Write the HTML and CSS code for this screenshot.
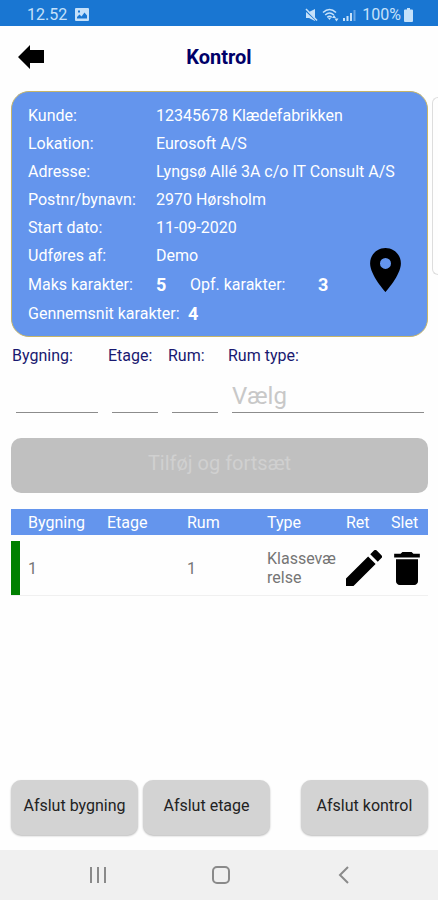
FILE: index.html
```html
<!DOCTYPE html>
<html lang="da">
<head>
<meta charset="utf-8">
<meta name="viewport" content="width=device-width, initial-scale=1">
<title>Kontrol</title>
<link rel="stylesheet" href="styles.css">
</head>
<body>
<div class="status">
  <span class="status-time">12.52</span>
  <svg class="status-picture" width="14" height="13" viewBox="0 0 14 13"><path fill="currentColor" fill-rule="evenodd" d="M1 0h12a1 1 0 0 1 1 1v11a1 1 0 0 1-1 1H1a1 1 0 0 1-1-1V1a1 1 0 0 1 1-1zM2 10.500h10V7.500L9.500 4.500 6.500 8.500 4.500 6.500 2 9zM3 2.500v2h2v-2z"/></svg>
  <span class="status-icons">
    <svg width="13" height="14" viewBox="0 0 13 14"><path fill="currentColor" d="M1 4h3l6-3v12L4 10H1z"/><path d="M0 2l12 11" stroke="#1976d2" stroke-width="1.500"/><path d="M1 1l11 11.500" stroke="currentColor" stroke-width="1.500"/></svg>
    <svg width="17" height="14" viewBox="0 0 17 14" fill="none" stroke="currentColor" stroke-width="1.600"><path d="M1 4.500Q7.500-1.500 14 4.500M3.200 7Q7.500 3 11.800 7M5.300 9.300Q7.500 7.300 9.700 9.300"/><path fill="currentColor" stroke="none" d="M6 10h3l-1.500 2zM10 10l2-3 2 3zM12.500 10.500h4L14.500 13.500z"/></svg>
    <svg width="13" height="14" viewBox="0 0 13 14" fill="currentColor"><path d="M0 10h2v3H0zM3.500 8h2v5h-2zM7 5h2v8H7z"/><path opacity=".45" d="M10.500 2h2v11h-2z"/></svg>
  </span>
  <span class="status-battery">100%</span>
  <svg width="9" height="14" viewBox="0 0 9 14"><path fill="currentColor" d="M3 0h3v1.500h2a1 1 0 0 1 1 1V13a1 1 0 0 1-1 1H1a1 1 0 0 1-1-1V2.500a1 1 0 0 1 1-1h2z"/></svg>
</div>

<header class="header">
  <button class="icon-button" type="button" aria-label="Tilbage">
    <svg width="26" height="24" viewBox="0 0 26 24"><path d="M0 12L12 0v5h14v13H12v6z"/></svg>
  </button>
  <h1 class="title">Kontrol</h1>
</header>

<main class="main">
  <div class="carousel">
    <section class="card">
      <dl class="facts">
        <div class="fact"><dt>Kunde:</dt><dd>12345678 Klædefabrikken</dd></div>
        <div class="fact"><dt>Lokation:</dt><dd>Eurosoft A/S</dd></div>
        <div class="fact"><dt>Adresse:</dt><dd>Lyngsø Allé 3A c/o IT Consult A/S</dd></div>
        <div class="fact"><dt>Postnr/bynavn:</dt><dd>2970 Hørsholm</dd></div>
        <div class="fact"><dt>Start dato:</dt><dd>11-09-2020</dd></div>
        <div class="fact"><dt>Udføres af:</dt><dd>Demo</dd></div>
      </dl>
      <dl class="grades">
        <dt class="grade-max">Maks karakter:</dt><dd class="grade-max-value">5</dd>
        <dt class="grade-achieved">Opf. karakter:</dt><dd>3</dd>
      </dl>
      <dl class="grades">
        <dt class="grade-average">Gennemsnit karakter:</dt><dd>4</dd>
      </dl>
      <button class="icon-button pin" type="button" aria-label="Vis på kort">
        <svg width="31" height="44" viewBox="5 2 14 20"><path d="M12 2C8.130 2 5 5.130 5 9c0 5.250 7 13 7 13s7-7.750 7-13c0-3.870-3.130-7-7-7zm0 9.500a2.500 2.500 0 0 1 0-5 2.500 2.500 0 0 1 0 5z"/></svg>
      </button>
    </section>
    <div class="next-card"></div>
  </div>

  <form class="form">
    <div class="fields">
      <div class="field"><label for="bygning">Bygning:</label><input id="bygning" type="text"></div>
      <div class="field"><label for="etage">Etage:</label><input id="etage" type="text"></div>
      <div class="field"><label for="rum">Rum:</label><input id="rum" type="text"></div>
      <div class="field"><label for="rumtype">Rum type:</label><select id="rumtype"><option>Vælg</option></select></div>
    </div>
    <button class="add" type="submit" disabled>Tilføj og fortsæt</button>
  </form>

  <table class="rooms">
    <colgroup><col class="col-building"><col class="col-floor"><col class="col-room"><col><col class="col-edit"><col class="col-delete"></colgroup>
    <thead>
      <tr><th>Bygning</th><th>Etage</th><th>Rum</th><th>Type</th><th>Ret</th><th>Slet</th></tr>
    </thead>
    <tbody>
      <tr>
        <td>1</td><td></td><td>1</td><td class="type">Klasseværelse</td>
        <td><button class="icon-button" type="button" aria-label="Ret"><svg width="36" height="36" viewBox="3 3 18 18"><path d="M3 17.250V21h3.750L17.810 9.940l-3.750-3.750L3 17.250zM20.710 7.040a1 1 0 0 0 0-1.410l-2.340-2.340a1 1 0 0 0-1.410 0l-1.830 1.830 3.750 3.750 1.830-1.830z"/></svg></button></td>
        <td><button class="icon-button delete" type="button" aria-label="Slet"><svg width="26" height="33" viewBox="5 3 14 18"><path d="M6 19c0 1.100.9 2 2 2h8c1.100 0 2-.9 2-2V7H6v12zM19 4h-3.500l-1-1h-5l-1 1H5v2h14V4z"/></svg></button></td>
      </tr>
    </tbody>
  </table>

  <div class="actions">
    <button type="button">Afslut bygning</button>
    <button type="button">Afslut etage</button>
    <button class="finish" type="button">Afslut kontrol</button>
  </div>
</main>

<nav class="nav" aria-label="System">
  <button class="icon-button" type="button" aria-label="Seneste apps"><svg width="18" height="18" viewBox="0 0 18 18" fill="none" stroke="#8a8a8a" stroke-width="2"><path d="M2 1v16M9 1v16M16 1v16"/></svg></button>
  <button class="icon-button" type="button" aria-label="Hjem"><svg width="18" height="18" viewBox="0 0 18 18" fill="none" stroke="#8a8a8a" stroke-width="2"><rect x="1" y="1" width="16" height="16" rx="4"/></svg></button>
  <button class="icon-button" type="button" aria-label="Tilbage"><svg width="18" height="18" viewBox="0 0 18 18" fill="none" stroke="#8a8a8a" stroke-width="2"><path d="M13 1L5 9l8 8"/></svg></button>
</nav>
</body>
</html>
```

FILE: styles.css
```css
* {
  box-sizing: border-box;
}

body {
  display: flex;
  flex-direction: column;
  min-height: 100vh;
  margin: 0;
  overflow-x: hidden;
  background: #fefefe;
  font-family: Roboto, "Liberation Sans", sans-serif;
  font-size: 16px;
}

button,
input,
select {
  font: inherit;
}

svg {
  display: block;
}

dl,
dd {
  margin: 0;
}

.icon-button {
  display: block;
  padding: 0;
  border: 0;
  background: none;
}

/* Status bar */

.status {
  display: flex;
  align-items: center;
  padding: 3px 25px 0 27px;
  background: #1976d2;
  color: #c5e1fa;
  line-height: 23px;
}

.status-picture {
  margin-left: 8px;
}

.status-icons {
  display: flex;
  gap: 4px;
  margin-left: auto;
}

.status-battery {
  margin: 0 3px 0 6px;
}

/* Header */

.header {
  display: grid;
  grid-template-columns: 26px 1fr 26px;
  align-items: center;
  padding: 0 18px;
}

.title {
  margin: 0;
  color: #000068;
  font-size: 20px;
  font-weight: 700;
  line-height: 62px;
  text-align: center;
}

/* Customer card */

.main {
  display: flex;
  flex: 1;
  flex-direction: column;
  padding: 3px 10px 15px 11px;
}

.carousel {
  display: flex;
  gap: 4px;
  margin-right: -10px;
}

.card {
  position: relative;
  flex: 1;
  padding: 10px 16px 8px;
  border: 1px solid #c6b569;
  border-radius: 18px;
  background: #6495ed;
  color: #fff;
}

.next-card {
  width: 6px;
  margin: 6px 0 62px;
  border: 1px solid #ddd;
  border-right: 0;
  border-radius: 6px 0 0 6px;
}

.fact {
  display: grid;
  grid-template-columns: 128px 1fr;
  line-height: 28px;
}

.grades {
  display: flex;
  line-height: 29px;
}

.grades dd {
  font-size: 18px;
  font-weight: 700;
}

.grade-max {
  width: 128px;
}

.grade-max-value {
  width: 34px;
}

.grade-achieved {
  width: 128px;
}

.grade-average {
  width: 160px;
}

.pin {
  position: absolute;
  right: 26px;
  bottom: 44px;
}

/* Entry form */

.fields {
  display: grid;
  grid-template-columns: 90px 54px 54px 1fr;
  gap: 6px;
  padding: 8px 0 0 1px;
}

.field {
  display: flex;
  flex-direction: column;
  color: #191970;
  line-height: 22px;
}

.field input,
.field select {
  min-width: 0;
  height: 46px;
  margin: 0 4px;
  padding: 12px 0 0;
  border: 0;
  border-bottom: 1px solid #8c8c8c;
  border-radius: 0;
  background: none;
  color: #c8c8c8;
  font-size: 24px;
  line-height: 32px;
  appearance: none;
}

.add {
  display: block;
  width: 100%;
  margin-top: 25px;
  padding: 10px 0 15px;
  border: 0;
  border-radius: 10px;
  background: #c0c0c0;
  color: #d0d0d0;
  font-size: 20px;
  line-height: 30px;
}

/* Room table */

.rooms {
  width: 100%;
  margin-top: 16px;
  border-spacing: 0;
  table-layout: fixed;
}

.col-building {
  width: 96px;
}

.col-floor,
.col-room {
  width: 80px;
}

.col-edit {
  width: 45px;
}

.col-delete {
  width: 37px;
}

.rooms th {
  padding: 2px 0 0;
  background: #6495ed;
  color: #fff;
  font-weight: 400;
  line-height: 24px;
  text-align: left;
}

.rooms td {
  height: 61px;
  padding: 0;
  border-top: 6px solid #fefefe;
  border-bottom: 1px solid #f0f0f0;
  color: #757575;
  line-height: 19px;
}

.rooms th:first-child,
.rooms td:first-child {
  padding-left: 17px;
}

.rooms td:first-child {
  box-shadow: inset 9px 0 #008000;
}

.rooms .type {
  padding-right: 8px;
  word-break: break-all;
}

.delete {
  margin-left: 3px;
}

/* Bottom actions */

.actions {
  display: flex;
  gap: 5px;
  margin-top: auto;
}

.actions button {
  flex: 0 1 127px;
  padding: 13px 0 17px;
  border: 0;
  border-radius: 10px;
  background: #d3d3d3;
  box-shadow: 0 1px 2px #bbb;
  color: #222;
  line-height: 25px;
  white-space: nowrap;
}

.actions .finish {
  margin-left: auto;
}

/* System navigation */

.nav {
  display: flex;
  justify-content: space-around;
  padding: 16px 32px 16px 36px;
  background: #f0f0f0;
}
```
